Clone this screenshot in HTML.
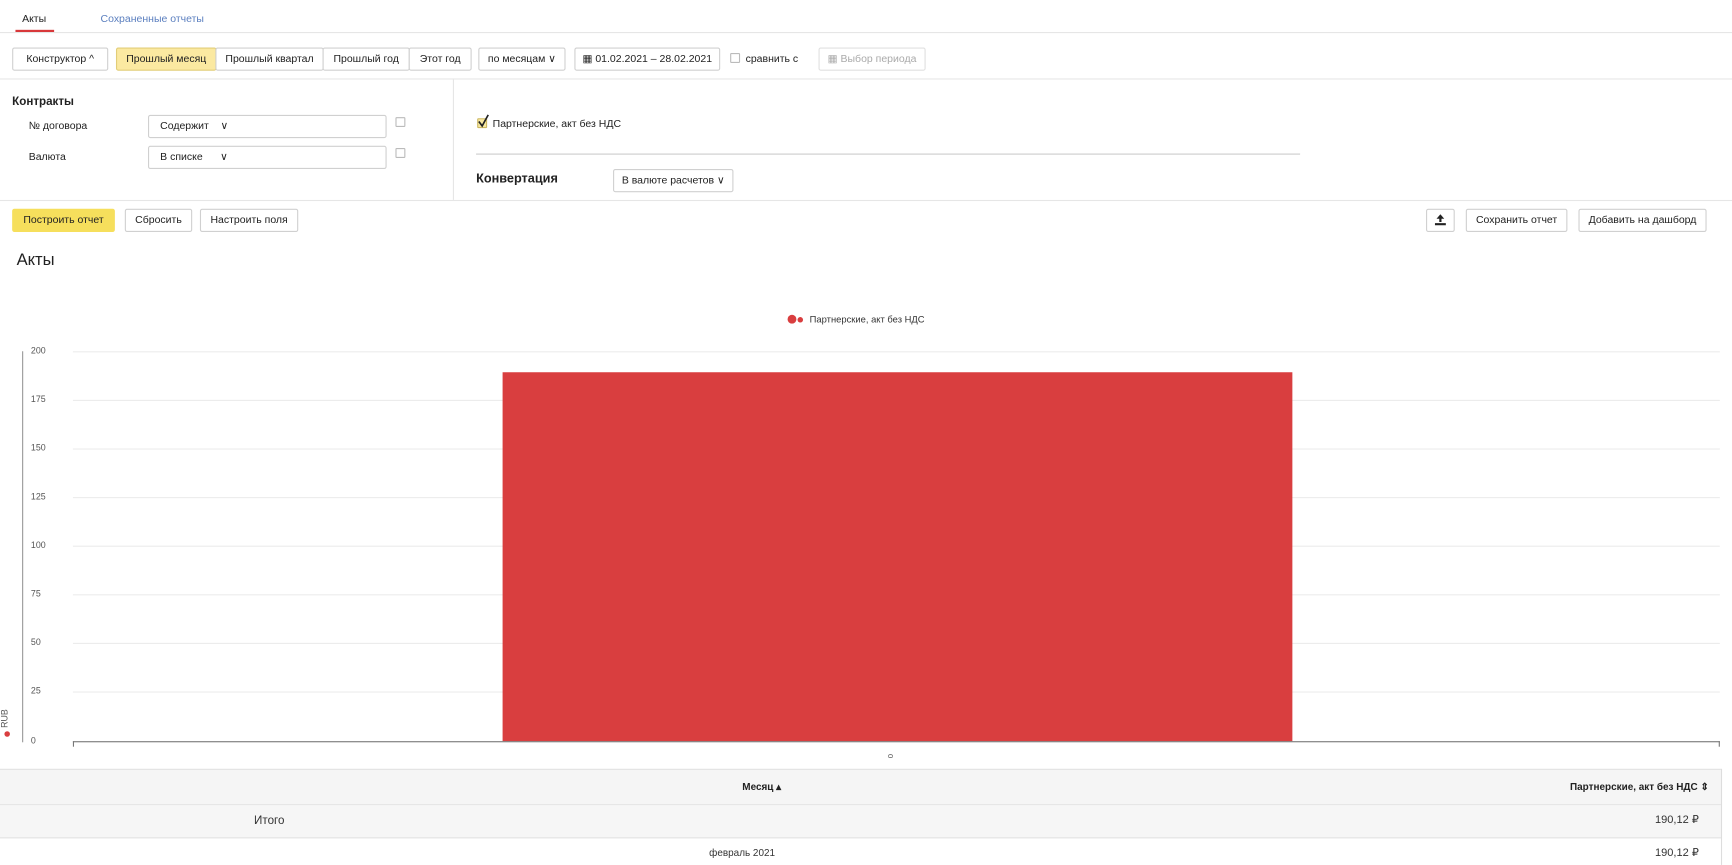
<!DOCTYPE html>
<html><head><meta charset="utf-8">
<style>
html,body{margin:0;padding:0;width:1732px;height:865px;overflow:hidden;background:#fff;}
#w{position:absolute;left:0;top:0;width:1568px;height:783px;transform:scale(1.10459);transform-origin:0 0;font-family:"Liberation Sans",sans-serif;font-size:9.5px;color:#222;}
.a{position:absolute;white-space:nowrap;}
.b{position:absolute;box-sizing:border-box;border:1px solid #d0d0d0;border-radius:2px;background:#fff;height:21px;line-height:19px;text-align:center;font-size:9.5px;color:#222;}
.hl{position:absolute;height:1px;background:#e6e6e6;}
.cb{position:absolute;width:9px;height:9px;border:1px solid #bbb;border-radius:1px;box-sizing:border-box;background:#fff;}
.g{position:absolute;left:66px;width:1491px;height:1px;background:#ececec;}
.yl{position:absolute;left:28px;font-size:8px;color:#555;}
</style></head><body><div id="w">
<div class="a" style="left:20px;top:12px;">Акты</div>
<div class="a" style="left:91px;top:12px;color:#5b7fbf;">Сохраненные отчеты</div>
<div class="a" style="left:14px;top:27px;width:35px;height:2px;background:#d8383a;"></div>
<div class="hl" style="left:0;top:29px;width:1568px;"></div>
<div class="b" style="left:11px;top:43px;width:87px;">Конструктор ^</div>
<div class="b" style="left:105px;top:43px;width:91px;background:#fbe9a1;border-color:#e2cd78;">Прошлый месяц</div>
<div class="b" style="left:195px;top:43px;width:98px;">Прошлый квартал</div>
<div class="b" style="left:292px;top:43px;width:79px;">Прошлый год</div>
<div class="b" style="left:370px;top:43px;width:57px;">Этот год</div>
<div class="b" style="left:433px;top:43px;width:79px;">по месяцам ∨</div>
<div class="b" style="left:520px;top:43px;width:132px;">▦ 01.02.2021 – 28.02.2021</div>
<div class="cb" style="left:661px;top:48px;"></div>
<div class="a" style="left:675px;top:48px;">сравнить с</div>
<div class="b" style="left:741px;top:43px;width:97px;color:#aaa;border-color:#e0e0e0;">▦ Выбор периода</div>
<div class="hl" style="left:0;top:71px;width:1568px;"></div>
<div class="a" style="left:410px;top:71px;width:1px;height:110px;background:#e6e6e6;"></div>
<div class="a" style="left:11px;top:86px;font-size:10.5px;font-weight:bold;">Контракты</div>
<div class="a" style="left:26px;top:109px;">№ договора</div>
<div class="b" style="left:134px;top:104px;width:216px;text-align:left;padding-left:10px;">Содержит &nbsp; &nbsp;∨</div>
<div class="cb" style="left:358px;top:106px;"></div>
<div class="a" style="left:26px;top:137px;">Валюта</div>
<div class="b" style="left:134px;top:132px;width:216px;text-align:left;padding-left:10px;">В списке &nbsp; &nbsp; &nbsp;∨</div>
<div class="cb" style="left:358px;top:134px;"></div>
<div class="cb" style="left:432px;top:107px;background:#f6e7a0;border-color:#cdb860;"></div>
<svg class="a" style="left:432px;top:103px" width="11" height="13"><path d="M1.5 7 L4.5 11 L10 1" stroke="#222" stroke-width="1.5" fill="none"/></svg>
<div class="a" style="left:446px;top:107px;">Партнерские, акт без НДС</div>
<div class="a" style="left:431px;top:139px;width:746px;height:1px;background:#ccc;"></div>
<div class="a" style="left:431px;top:156px;font-size:11.5px;font-weight:bold;">Конвертация</div>
<div class="b" style="left:555px;top:153px;width:109px;">В валюте расчетов ∨</div>
<div class="hl" style="left:0;top:181px;width:1568px;"></div>
<div class="b" style="left:11px;top:189px;width:93px;background:#f6df5c;border-color:#f6df5c;">Построить отчет</div>
<div class="b" style="left:113px;top:189px;width:61px;">Сбросить</div>
<div class="b" style="left:181px;top:189px;width:89px;">Настроить поля</div>
<div class="b" style="left:1291px;top:189px;width:26px;"></div>
<svg class="a" style="left:1299px;top:194px" width="10" height="10"><path d="M5 0 L8.5 4 H6 V7 H4 V4 H1.5 Z" fill="#222"/><rect x="0" y="8" width="10" height="2" fill="#222"/></svg>
<div class="b" style="left:1327px;top:189px;width:92px;">Сохранить отчет</div>
<div class="b" style="left:1429px;top:189px;width:116px;">Добавить на дашборд</div>
<div class="a" style="left:15px;top:227px;font-size:15px;">Акты</div>
<div class="a" style="left:713px;top:285px;width:8px;height:8px;border-radius:50%;background:#d93e3f;"></div>
<div class="a" style="left:722px;top:287px;width:5px;height:5px;border-radius:50%;background:#d93e3f;"></div>
<div class="a" style="left:733px;top:284px;font-size:8.5px;color:#333;">Партнерские, акт без НДС</div>
<div class="a" style="left:20px;top:318px;width:1px;height:354px;background:#999;"></div>
<div class="g" style="top:318px"></div><div class="g" style="top:362px"></div><div class="g" style="top:406px"></div><div class="g" style="top:450px"></div><div class="g" style="top:494px"></div><div class="g" style="top:538px"></div><div class="g" style="top:582px"></div><div class="g" style="top:626px"></div>
<div class="yl" style="top:313px">200</div><div class="yl" style="top:357px">175</div><div class="yl" style="top:401px">150</div><div class="yl" style="top:445px">125</div><div class="yl" style="top:489px">100</div><div class="yl" style="top:533px">75</div><div class="yl" style="top:577px">50</div><div class="yl" style="top:621px">25</div><div class="yl" style="top:666px">0</div>
<div class="a" style="left:455px;top:337px;width:715px;height:334px;background:#d93e3f;"></div>
<div class="a" style="left:66px;top:671px;width:1491px;height:1px;background:#777;"></div>
<div class="a" style="left:66px;top:671px;width:1px;height:5px;background:#777;"></div>
<div class="a" style="left:1556px;top:671px;width:1px;height:5px;background:#777;"></div>
<div class="a" style="left:805px;top:681px;font-size:7px;color:#555;transform:rotate(-90deg);">0</div>
<div class="a" style="left:4px;top:662px;width:5px;height:5px;border-radius:50%;background:#d93e3f;"></div>
<div class="a" style="left:-4px;top:646px;font-size:8px;color:#555;transform:rotate(-90deg);">RUB</div>
<div class="a" style="left:0;top:696px;width:1558px;height:31px;background:#f5f5f5;border-top:1px solid #e3e3e3;border-bottom:1px solid #e3e3e3;"></div>
<div class="a" style="left:672px;top:707px;font-weight:bold;font-size:9px;">Месяц ▴</div>
<div class="a" style="right:21px;top:707px;font-weight:bold;font-size:9px;">Партнерские, акт без НДС ⇕</div>
<div class="a" style="left:0;top:729px;width:1558px;height:29px;background:#f6f6f6;border-bottom:1px solid #e3e3e3;"></div>
<div class="a" style="left:230px;top:737px;font-size:10.5px;color:#333;">Итого</div>
<div class="a" style="right:30px;top:737px;font-size:10px;color:#333;">190,12 ₽</div>
<div class="a" style="left:642px;top:767px;font-size:9px;color:#333;">февраль 2021</div>
<div class="a" style="right:30px;top:767px;font-size:10px;color:#333;">190,12 ₽</div>
<div class="a" style="left:1558px;top:696px;width:1px;height:87px;background:#ddd;"></div>
</div></body></html>
